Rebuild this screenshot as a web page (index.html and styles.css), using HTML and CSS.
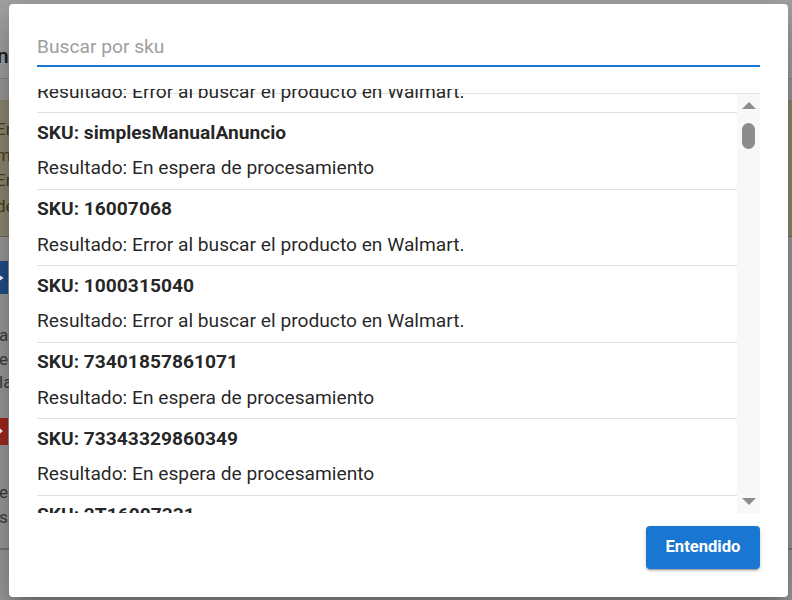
FILE: index.html
```html
<!DOCTYPE html>
<html lang="es">
<head>
<meta charset="utf-8">
<title>Buscar por sku</title>
<link rel="stylesheet" href="styles.css">
</head>
<body>
<div class="page">
  <header class="page-header"><span class="page-title">n</span></header>
  <div class="alert">
    <p>Error al publicar</p>
    <p>m</p>
    <p>Error al publicar</p>
    <p>de</p>
  </div>
  <div class="btn-blue"><svg width="10" height="12" viewBox="0 0 10 12"><path d="M0 2 L6 6 L0 10" fill="none" stroke="#fff" stroke-width="3"/></svg></div>
  <div class="text-block">
    <p>a</p>
    <p>el</p>
    <p>la</p>
  </div>
  <div class="btn-red"><svg width="10" height="12" viewBox="0 0 10 12"><path d="M0 1 L6 6 L0 11 Z" fill="#fff"/></svg></div>
  <div class="text-block second">
    <p>e</p>
    <p>s</p>
  </div>
  <div class="page-rule"></div>
</div>

<div class="modal" role="dialog">
  <input class="search" type="text" placeholder="Buscar por sku">
  <div class="list-wrap">
    <div class="list-view">
      <ul class="list">
        <li class="item"><p class="sku">SKU: 16007069</p><p class="result">Resultado: Error al buscar el producto en Walmart.</p></li>
        <li class="item"><p class="sku">SKU: simplesManualAnuncio</p><p class="result">Resultado: En espera de procesamiento</p></li>
        <li class="item"><p class="sku">SKU: 16007068</p><p class="result">Resultado: Error al buscar el producto en Walmart.</p></li>
        <li class="item"><p class="sku">SKU: 1000315040</p><p class="result">Resultado: Error al buscar el producto en Walmart.</p></li>
        <li class="item"><p class="sku">SKU: 73401857861071</p><p class="result">Resultado: En espera de procesamiento</p></li>
        <li class="item"><p class="sku">SKU: 73343329860349</p><p class="result">Resultado: En espera de procesamiento</p></li>
        <li class="item"><p class="sku">SKU: 2T16007331</p><p class="result">Resultado: En espera de procesamiento</p></li>
      </ul>
    </div>
    <div class="scrollbar">
      <span class="arrow-up"></span>
      <span class="thumb"></span>
      <span class="spacer"></span>
      <span class="arrow-down"></span>
    </div>
  </div>
  <div class="actions">
    <button class="btn-primary" type="button">Entendido</button>
  </div>
</div>
</body>
</html>
```

FILE: styles.css
```css
* { box-sizing: border-box; }

html, body {
  margin: 0;
  padding: 0;
}

body {
  width: 792px;
  height: 600px;
  overflow: hidden;
  background: #9c9c9c;
  font-family: Roboto, "Liberation Sans", Arial, sans-serif;
  position: relative;
}

/* ---------- dimmed page behind the dialog ---------- */
.page {
  display: flex;
  flex-direction: column;
  height: 600px;
}

.page-header {
  height: 79px;
  background: #a3a3a3;
  border-bottom: 1px solid #8a8a8a;
  display: flex;
  align-items: center;
  padding-top: 34px;
}

.page-title {
  font-size: 21px;
  font-weight: 500;
  color: #1e1e1e;
  margin-left: -3px;
}

.alert {
  margin-top: 21px;
  height: 137px;
  background: #8f8a72;
  border-bottom: 1px solid #6e6a55;
  padding-top: 17px;
  color: #4a401e;
  font-size: 17px;
}

.alert p {
  margin: 0;
  line-height: 25.5px;
  white-space: nowrap;
  text-indent: -4px;
}

.btn-blue {
  margin-top: 24px;
  margin-left: -24px;
  width: 32px;
  height: 33px;
  background: #1f4e8c;
  display: flex;
  align-items: center;
  justify-content: flex-end;
  padding-right: 3px;
}

.btn-red {
  margin-top: 23px;
  margin-left: -24px;
  width: 32px;
  height: 27px;
  background: #a3281f;
  display: flex;
  align-items: center;
  justify-content: flex-end;
  padding-right: 1px;
}

.text-block {
  margin-top: 30px;
  color: #3c3c3c;
  font-size: 17px;
}

.text-block p {
  margin: 0;
  line-height: 23.5px;
  white-space: nowrap;
  text-indent: -1px;
}

.text-block.second {
  margin-top: 35px;
}

.text-block.second p {
  line-height: 25px;
}

.page-rule {
  margin-top: 18px;
  height: 2px;
  background: #7a7a7a;
}

/* ---------- dialog ---------- */
.modal {
  position: absolute;
  left: 9px;
  top: 4px;
  width: 779px;
  height: 593px;
  background: #fff;
  border-radius: 4px;
  padding: 25px 28px 28px;
  display: flex;
  flex-direction: column;
  box-shadow: 0 11px 15px -7px rgba(0,0,0,0.2), 0 24px 38px 3px rgba(0,0,0,0.14), 0 9px 46px 8px rgba(0,0,0,0.12);
}

.search {
  display: block;
  width: 100%;
  height: 38px;
  border: 0;
  border-bottom: 2px solid #1976d2;
  padding: 0 0 1px;
  font-family: Roboto, "Liberation Sans", Arial, sans-serif;
  font-size: 19.2px;
  color: #222;
  outline: none;
  background: transparent;
}

.search::placeholder {
  color: #9e9e9e;
}

.list-wrap {
  margin-top: 22px;
  height: 424px;
  display: flex;
  position: relative;
}

.list-wrap::before {
  content: "";
  position: absolute;
  left: 0;
  right: 0;
  top: 4px;
  height: 1px;
  background: #e3e3e3;
}

.list-view {
  flex: 1;
  overflow: hidden;
  position: relative;
}

.list {
  list-style: none;
  margin: -52.6px 0 0;
  padding: 0;
}

.item {
  padding: 7.6px 0 8.4px;
  border-bottom: 1px solid #e0e0e0;
}

.item p {
  margin: 0;
  font-size: 19.2px;
  line-height: 24px;
  color: rgba(0,0,0,0.87);
  white-space: nowrap;
}

.item .sku {
  font-weight: 700;
}

.item .result {
  margin-top: 11.6px;
}

.scrollbar {
  width: 23px;
  margin-top: 5px;
  background: #f8f8f8;
  display: flex;
  flex-direction: column;
  align-items: center;
  padding: 8px 0;
  position: relative;
}

.arrow-up {
  width: 0;
  height: 0;
  border-left: 7px solid transparent;
  border-right: 7px solid transparent;
  border-bottom: 7px solid #8c8c8c;
}

.arrow-down {
  width: 0;
  height: 0;
  border-left: 7px solid transparent;
  border-right: 7px solid transparent;
  border-top: 7px solid #8c8c8c;
}

.thumb {
  margin-top: 14px;
  width: 13px;
  height: 26px;
  border-radius: 7px;
  background: #8c8c8c;
}

.spacer {
  flex: 1;
}

.actions {
  margin-top: 13px;
  display: flex;
  justify-content: flex-end;
}

.btn-primary {
  width: 114px;
  height: 43px;
  border: 0;
  border-radius: 4px;
  background: #1976d2;
  color: #fff;
  font-family: Roboto, "Liberation Sans", Arial, sans-serif;
  font-size: 16.6px;
  font-weight: 700;
  box-shadow: 0 3px 1px -2px rgba(0,0,0,0.2), 0 2px 2px 0 rgba(0,0,0,0.14), 0 1px 5px 0 rgba(0,0,0,0.12);
  cursor: pointer;
  padding: 0 0 2px;
}
```
